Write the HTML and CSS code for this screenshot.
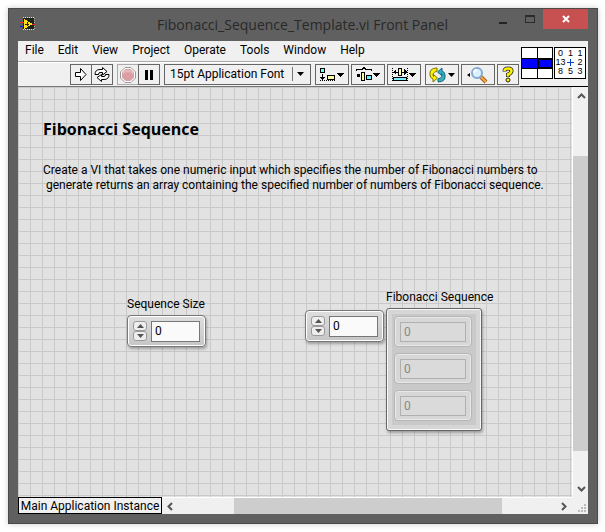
FILE: index.html
```html
<!DOCTYPE html>
<html lang="en">
<head>
<meta charset="utf-8">
<title>Fibonacci_Sequence_Template.vi Front Panel</title>
<link rel="stylesheet" href="styles.css">
</head>
<body>
<div class="window">
  <header class="titlebar">
    <svg class="app-icon" width="16" height="14" viewBox="0 0 16 14" shape-rendering="crispEdges">
      <rect x="3" y="1" width="11" height="11" fill="#1c2412"/>
      <path d="M3 .5H15M3 12.5H15" stroke="#ddd" stroke-dasharray="1 1"/>
      <path d="M14.500 1V13" stroke="#aaa" stroke-dasharray="1 1"/>
      <path d="M4 2L13 7 4 12Z" fill="#ffe11a"/>
      <path d="M5 7H9M7 5V9" stroke="#222"/>
      <path d="M0 5H4M12 7H16" stroke="#e22"/>
      <path d="M0 9H4" stroke="#11e"/>
    </svg>
    <h1 class="title">Fibonacci_Sequence_Template.vi Front Panel</h1>
    <div class="win-buttons">
      <button class="win-btn" aria-label="Minimize"><svg width="8" height="10"><path d="M0 9H8" stroke="#222" stroke-width="2"/></svg></button>
      <button class="win-btn" aria-label="Maximize"><svg width="10" height="8" shape-rendering="crispEdges"><path d="M.5 0V7.500H9.500V1H0" fill="none" stroke="#2b2b2b"/><path d="M0 1H10" stroke="#2b2b2b" stroke-width="2"/></svg></button>
      <button class="win-btn close" aria-label="Close"><svg width="8" height="8"><path d="M1 1L7 7M7 1L1 7" stroke="#fff" stroke-width="2"/></svg></button>
    </div>
  </header>
  <main class="client">
    <div class="top">
      <div class="bars">
        <nav class="menubar">
          <button>File</button><button>Edit</button><button>View</button><button>Project</button><button>Operate</button><button>Tools</button><button>Window</button><button>Help</button>
        </nav>
        <div class="toolbar">
          <div class="group">
            <button class="tool" aria-label="Run"><svg width="16" height="15" viewBox="0 0 16 15"><path d="M2.500 5.500H7.500V1.500L13 7.500 7.500 13.500V9.500H2.500Z" fill="#fff" stroke="#000"/></svg></button>
            <button class="tool" aria-label="Run Continuously"><svg width="16" height="15" viewBox="0 0 16 15"><path d="M1 7.500Q1 2.500 6 2.500H8.500V.5L13 4.500 8.500 8V5.500H6Q4.500 5.500 4.500 7.500ZM15 7.500Q15 12.500 10 12.500H7.500V14.500L3 10.500 7.500 7.500V9.500H10Q11.500 9.500 11.500 7.500Z" fill="#fff" stroke="#000"/></svg></button>
          </div>
          <div class="group">
            <button class="tool faded" aria-label="Abort Execution"><svg width="16" height="16" viewBox="0 0 16 16"><path d="M5 .5H11L15.500 5V11L11 15.500H5L.5 11V5Z" fill="#fff" stroke="#999"/><path d="M5.500 2H10.500L14 5.500V10.500L10.500 14H5.500L2 10.500V5.500Z" fill="#d99fa3"/><path d="M3 7Q8 3 13 7V5L10 3H6L3 5Z" fill="#e6babc"/></svg></button>
            <button class="tool" aria-label="Pause"><svg width="10" height="10"><path d="M2.500 0V10M7.500 0V10" stroke="#000" stroke-width="3"/></svg></button>
          </div>
          <div class="font-box">
            <select class="font-select" aria-label="Text settings"><option>15pt Application Font</option></select>
            <svg class="font-arrow" width="12" height="14"><path d="M.5 0V14" stroke="#777"/><path d="M5 5H12L8.500 9Z"/></svg>
          </div>
          <div class="menus">
            <button class="tool drop" aria-label="Align Objects"><svg width="24" height="15" viewBox="0 0 24 15" shape-rendering="crispEdges"><rect x=".5" y="1.500" width="4" height="4" fill="#6ff" stroke="#000"/><path d="M2.500 7V12"  stroke="#000"/><path d="M0 10H5L2.500 13Z"/><rect x="7.500" y="8.500" width="7" height="4" fill="#ff9" stroke="#000"/><path d="M0 13.500H16" stroke="#000" stroke-dasharray="1 1"/><path d="M17 6H24L20.500 10Z"/></svg></button>
            <button class="tool drop" aria-label="Distribute Objects"><svg width="24" height="15" viewBox="0 0 24 15" shape-rendering="crispEdges"><path d="M0 3.500V2.500H6L8 .5 10 2.500H15.500V4" fill="none" stroke="#000"/><rect x="1" y="7" width="3" height="3"/><rect x="5.500" y="5.500" width="3" height="8" fill="#ff9" stroke="#000"/><rect x="10.500" y="8.500" width="5" height="4" fill="#6ef" stroke="#000"/><path d="M17 6H24L20.500 10Z"/></svg></button>
            <button class="tool drop" aria-label="Resize Objects"><svg width="24" height="15" viewBox="0 0 24 15" shape-rendering="crispEdges"><path d="M.5 1V14M15.500 1V14" stroke="#000" stroke-dasharray="1 1"/><path d="M1 5H6M10 5H15" stroke="#000"/><path d="M1 5L4 2V8ZM15 5L12 2V8Z"/><rect x="6.500" y="1.500" width="3" height="7" fill="#ff9" stroke="#000"/><rect x="1.500" y="10.500" width="13" height="3" fill="#7ef" stroke="#000"/><path d="M17 6H24L20.500 10Z"/></svg></button>
          </div>
          <div class="menus">
            <button class="tool drop" aria-label="Reorder"><svg width="26" height="16" viewBox="0 0 26 16"><path d="M8 1Q0 1 1 8 1 11 4 12V15L8.500 11 4.500 7.500V9.500Q2.500 6 8 4Z" fill="#fff000" stroke="#777200"/><path d="M9 15Q17 15 16 8 16 5 13 4V1L8.500 5 12.500 8.500V6.500Q14.500 10 9 12Z" fill="#35adc0" stroke="#15677a"/><path d="M19 6H26L22.500 10Z"/></svg></button>
            <button class="tool drop" aria-label="Search"><svg width="24" height="18" viewBox="0 0 24 18"><path d="M1 9L4 7V11Z"/><path d="M14 10L20 16" stroke="#a95f20" stroke-width="4"/><path d="M14 10L20 16" stroke="#f9a74c" stroke-width="2"/><circle cx="11" cy="7" r="5" fill="#d9f1ff" stroke="#83a9d4" stroke-width="2"/><path d="M8 7Q8 4 11 4" fill="none" stroke="#fff" stroke-width="2"/></svg></button>
            <button class="tool" aria-label="Context Help"><svg width="12" height="17" viewBox="0 0 12 17"><path d="M2.500 5.500Q2.500 2.500 6 2.500 9.500 2.500 9.500 5 9.500 7 6 8.500V11" fill="none" stroke="#222" stroke-width="4"/><path d="M2.500 5Q2.500 2.500 6 2.500 9.500 2.500 9.500 5 9.500 7 6 8.500V10.500" fill="none" stroke="#fff200" stroke-width="2.500"/><circle cx="6" cy="14" r="2" fill="#fff200" stroke="#222"/></svg></button>
          </div>
        </div>
      </div>
      <div class="vi-icons">
        <svg width="32" height="32" viewBox="0 0 32 32" shape-rendering="crispEdges"><rect x=".5" y=".5" width="31" height="31" fill="#fff" stroke="#000"/><rect x="1" y="11" width="30" height="10" fill="#00f" /><path d="M0 11.500H32M0 21.500H32M16.500 0V32" stroke="#000"/><path d="M17 12.500H31M17 20.500H31M17.500 12V21M30.500 12V21" stroke="#000"/></svg>
        <div class="vi-icon"><span>0</span><span>1</span><span>1</span><span>13</span><svg width="7" height="7"><path d="M0 3.500H7M3.500 0V7" stroke="#04c"/></svg><span>2</span><span>8</span><span>5</span><span>3</span></div>
      </div>
    </div>
    <div class="workspace">
      <section class="panel">
        <h2 class="panel-title">Fibonacci Sequence</h2>
        <p class="description">Create a VI that takes one numeric input which specifies the number of Fibonacci numbers to<br>&nbsp;generate returns an array containing the specified number of numbers of Fibonacci sequence.</p>
        <div class="size-control">
          <label for="size">Sequence Size</label>
          <div class="numeric">
            <div class="spinner"><button aria-label="Increase size"><svg width="7" height="4"><path d="M0 4L3.500 0 7 4Z"/></svg></button><button aria-label="Decrease size"><svg width="7" height="4"><path d="M0 0L3.500 4 7 0Z"/></svg></button></div>
            <input id="size" type="text" inputmode="numeric" value="0">
          </div>
        </div>
        <div class="array-control">
          <div class="numeric">
            <div class="spinner"><button aria-label="Next element"><svg width="7" height="4"><path d="M0 4L3.500 0 7 4Z"/></svg></button><button aria-label="Previous element"><svg width="7" height="4"><path d="M0 0L3.500 4 7 0Z"/></svg></button></div>
            <input type="text" inputmode="numeric" value="0" aria-label="Array index">
          </div>
          <div class="array">
            <label for="element-0">Fibonacci Sequence</label>
            <div class="elements">
              <div class="element"><input id="element-0" type="text" value="0" disabled></div>
              <div class="element"><input type="text" value="0" aria-label="Element 1" disabled></div>
              <div class="element"><input type="text" value="0" aria-label="Element 2" disabled></div>
            </div>
          </div>
        </div>
      </section>
      <div class="vscroll">
        <button aria-label="Scroll up"><svg width="9" height="6"><path d="M1 5L4.500 1.500 8 5" fill="none" stroke="#555" stroke-width="2"/></svg></button>
        <div class="track"><div class="thumb"></div></div>
        <button aria-label="Scroll down"><svg width="9" height="6"><path d="M1 1L4.500 4.500 8 1" fill="none" stroke="#555" stroke-width="2"/></svg></button>
      </div>
    </div>
    <footer class="bottom">
      <button class="instance">Main Application Instance</button>
      <div class="hscroll">
        <button aria-label="Scroll left"><svg width="6" height="9"><path d="M5 1L1.500 4.500 5 8" fill="none" stroke="#555" stroke-width="2"/></svg></button>
        <div class="track"><div class="thumb"></div></div>
        <button aria-label="Scroll right"><svg width="6" height="9"><path d="M1 1L4.500 4.500 1 8" fill="none" stroke="#555" stroke-width="2"/></svg></button>
      </div>
      <svg class="grip" width="8" height="8" shape-rendering="crispEdges"><path d="M6 0h2v2h-2zM3 3h2v2h-2zM6 3h2v2h-2zM0 6h2v2h-2zM3 6h2v2h-2zM6 6h2v2h-2z" fill="#bbb"/></svg>
    </footer>
  </main>
</div>
</body>
</html>
```
FILE: styles.css
```css
* { box-sizing: border-box; }

body {
  margin: 0;
  padding: 8px 7px 8px 8px;
  height: 100vh;
  background: #fff;
  color: #000;
  font: 12px/15px Roboto, "Open Sans", sans-serif;
}

button, input, select {
  margin: 0;
  padding: 0;
  border: 0;
  border-radius: 0;
  background: none;
  color: inherit;
  font: inherit;
}

svg { display: block; flex: none; }

.window {
  display: flex;
  flex-direction: column;
  height: 100%;
  padding: 0 9px 9px;
  border: 1px solid #4a4a4a;
  background: #606060;
  box-shadow: 0 0 6px rgba(0, 0, 0, .2);
}

.titlebar {
  display: flex;
  flex: none;
  height: 32px;
  align-items: flex-start;
}

.app-icon { margin: 8px 0 0 2px; }

.title {
  flex: 1;
  margin: 0;
  padding-left: 80px;
  color: #292929;
  font: 400 14px/31px "Open Sans", "Noto Sans", sans-serif;
  text-align: center;
  white-space: nowrap;
}

.win-buttons { display: flex; }

.win-btn {
  display: flex;
  width: 27px;
  height: 20px;
  align-items: center;
  justify-content: center;
}

.win-btn.close { width: 45px; background: #c75050; }

.client {
  display: flex;
  flex: 1;
  flex-direction: column;
  min-height: 0;
  background: #f0f0f0;
}

.top { display: flex; flex: none; height: 46px; }

.bars {
  flex: 1;
  min-width: 0;
  border-bottom: 1px solid #777;
}

.menubar {
  display: flex;
  height: 21px;
  padding: 0 7px;
  gap: 14px;
  border-bottom: 1px solid #aaa;
}

.menubar button { padding-bottom: 2px; }

.toolbar {
  display: flex;
  height: 24px;
  padding: 1px 1px 0 0;
  align-items: flex-start;
  justify-content: flex-end;
  gap: 4px;
  border-top: 1px solid #fff;
}

.group, .menus { display: flex; }
.menus { gap: 2px; }

.tool {
  display: flex;
  width: 22px;
  height: 21px;
  align-items: center;
  justify-content: center;
  border: 1px solid #666;
}

.tool + .tool { margin-left: -1px; }
.menus .tool + .tool { margin-left: 0; }
.tool.faded { border-color: #aaa; }
.tool.drop { width: 34px; }

.font-box { position: relative; width: 147px; height: 21px; }

.font-select {
  width: 100%;
  height: 100%;
  padding: 0 20px 1px 5px;
  appearance: none;
  border: 1px solid #666;
}

.font-arrow {
  position: absolute;
  top: 3px;
  right: 7px;
  pointer-events: none;
}

.vi-icons {
  display: flex;
  flex: none;
  width: 68px;
  padding: 6px 1px 0;
  gap: 1px;
  border-bottom: 1px solid #000;
}

.vi-icon {
  display: grid;
  width: 32px;
  height: 32px;
  padding: 1px 0;
  grid-template: repeat(3, 9px) / 11px 9px 10px;
  place-items: center;
  border: 1px solid #000;
  background: #fff;
  font: 9px/9px "Liberation Sans", sans-serif;
}

.workspace { display: flex; flex: 1; min-height: 0; }

.panel {
  position: relative;
  flex: 1;
  background-color: #e2e2e2;
  background-image:
    linear-gradient(#c9c9c9 1px, transparent 1px),
    linear-gradient(90deg, #c9c9c9 1px, transparent 1px);
  background-size: 12px 12px;
}

.panel-title {
  position: absolute;
  top: 32px;
  left: 25px;
  margin: 0;
  font: 700 16px/20px "Open Sans", "Noto Sans", sans-serif;
}

.description {
  position: absolute;
  top: 76px;
  left: 25px;
  margin: 0;
  white-space: nowrap;
}

.size-control { position: absolute; top: 210px; left: 109px; }
.size-control label { display: block; margin-bottom: 3px; }

.array-control {
  position: absolute;
  top: 203px;
  left: 287px;
  display: flex;
  gap: 2px;
}

.array-control > .numeric { margin-top: 20px; }

.numeric {
  display: flex;
  width: 79px;
  height: 32px;
  padding: 5px;
  align-items: center;
  gap: 4px;
  border: 1px solid #777;
  border-radius: 4px;
  background: linear-gradient(#dedede, #c6c6c6);
  box-shadow: inset 0 0 0 1px #fff, 1px 2px 3px rgba(0, 0, 0, .3);
}

.spinner { display: flex; width: 14px; flex-direction: column; }

.spinner button {
  display: flex;
  height: 10px;
  align-items: center;
  justify-content: center;
  border: 1px solid #999;
  border-radius: 3px;
  background: #eee;
  fill: #555;
}

.numeric input, .element input {
  width: 49px;
  height: 21px;
  padding-left: 3px;
  border: 1px solid #777;
  background: #fafafa;
}

.elements {
  display: flex;
  width: 96px;
  padding: 7px 7px 9px;
  flex-direction: column;
  gap: 6px;
  margin-top: 3px;
  border: 1px solid #666;
  border-radius: 3px;
  background: #c9c9c9;
  box-shadow: inset 0 0 0 1px #f7f7f7, inset 0 0 0 5px #d6d6d6, 1px 2px 3px rgba(0, 0, 0, .3);
}

.element {
  width: 78px;
  height: 31px;
  padding: 5px;
  border: 1px solid #b6b6b6;
  border-radius: 4px;
  background: #d7d7d7;
  box-shadow: inset 0 0 0 1px #e8e8e8;
}

.element input {
  display: block;
  width: 100%;
  height: 20px;
  border-color: #b0b0b0;
  background: #dadada;
  color: #888;
}

.vscroll {
  display: flex;
  flex: none;
  width: 16px;
  flex-direction: column;
  border-left: 1px solid #fff;
}

.vscroll button, .hscroll button {
  display: flex;
  width: 16px;
  height: 17px;
  align-items: center;
  justify-content: center;
}

.track { flex: 1; min-width: 0; min-height: 0; }
.thumb { background: #cdcdcd; }

.vscroll .track { padding: 52px 0 29px; }
.vscroll .thumb { height: 100%; }

.bottom { display: flex; flex: none; height: 17px; align-items: stretch; }

.instance {
  width: 144px;
  border: 1px solid #000;
  line-height: 14px;
  white-space: nowrap;
}

.hscroll { display: flex; flex: 1; border-top: 1px solid #fff; }
.hscroll .track { padding: 0 54px 0 56px; }
.hscroll .thumb { height: 100%; }

.grip { margin: 7px 2px 0 6px; }
```
